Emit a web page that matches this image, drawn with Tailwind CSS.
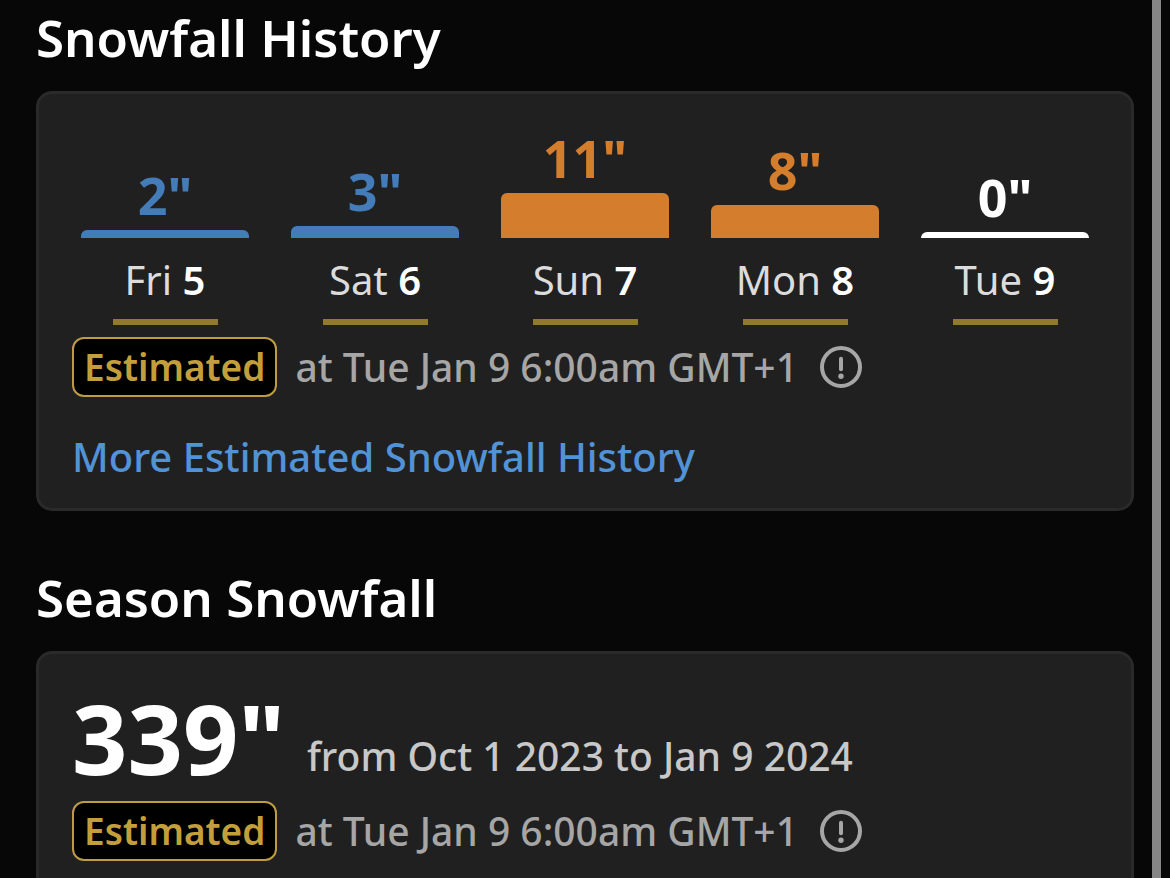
<!DOCTYPE html>
<html lang="en">
<head>
    <meta charset="UTF-8">
    <meta name="viewport" content="width=device-width, initial-scale=1.0">
    <title>Snowfall History</title>
    <script src="https://cdn.jsdelivr.net/npm/@tailwindcss/browser@4"></script>
</head>
<body class="flex h-screen overflow-hidden bg-[#070707] font-['Noto_Sans',sans-serif] text-white">
    <main class="flex-1 pl-9 pr-[18px] pt-[7px]">
        <!-- Snowfall History -->
        <section>
            <h2 class="mb-6 text-[51px] leading-[60px] font-semibold">Snowfall History</h2>
            <div class="rounded-2xl border-3 border-[#2a2a2a] bg-[#202020] px-[33px] pb-6">
                <ul class="-mx-3 grid grid-cols-5">
                    <li class="flex flex-col items-center">
                        <div class="flex h-36 w-4/5 flex-col justify-end text-center text-[#437cb8]">
                            <span class="mb-[5px] text-[52px] leading-[60px] font-bold">2"</span>
                            <div class="h-2 rounded-t-md bg-[#437cb8]"></div>
                        </div>
                        <p class="mt-[18px] text-[40px] leading-[48px] text-[#dcdcdc]">Fri <b class="font-semibold text-white">5</b></p>
                        <div class="mt-[15px] h-[6px] w-1/2 bg-[#91792d]"></div>
                    </li>
                    <li class="flex flex-col items-center">
                        <div class="flex h-36 w-4/5 flex-col justify-end text-center text-[#437cb8]">
                            <span class="mb-[5px] text-[52px] leading-[60px] font-bold">3"</span>
                            <div class="h-3 rounded-t-md bg-[#437cb8]"></div>
                        </div>
                        <p class="mt-[18px] text-[40px] leading-[48px] text-[#dcdcdc]">Sat <b class="font-semibold text-white">6</b></p>
                        <div class="mt-[15px] h-[6px] w-1/2 bg-[#91792d]"></div>
                    </li>
                    <li class="flex flex-col items-center">
                        <div class="flex h-36 w-4/5 flex-col justify-end text-center text-[#d47d2d]">
                            <span class="mb-[5px] text-[52px] leading-[60px] font-bold">11"</span>
                            <div class="h-[45px] rounded-t-md bg-[#d47d2d]"></div>
                        </div>
                        <p class="mt-[18px] text-[40px] leading-[48px] text-[#dcdcdc]">Sun <b class="font-semibold text-white">7</b></p>
                        <div class="mt-[15px] h-[6px] w-1/2 bg-[#91792d]"></div>
                    </li>
                    <li class="flex flex-col items-center">
                        <div class="flex h-36 w-4/5 flex-col justify-end text-center text-[#d47d2d]">
                            <span class="mb-[5px] text-[52px] leading-[60px] font-bold">8"</span>
                            <div class="h-[33px] rounded-t-md bg-[#d47d2d]"></div>
                        </div>
                        <p class="mt-[18px] text-[40px] leading-[48px] text-[#dcdcdc]">Mon <b class="font-semibold text-white">8</b></p>
                        <div class="mt-[15px] h-[6px] w-1/2 bg-[#91792d]"></div>
                    </li>
                    <li class="flex flex-col items-center">
                        <div class="flex h-36 w-4/5 flex-col justify-end text-center text-white">
                            <span class="mb-[5px] text-[52px] leading-[60px] font-bold">0"</span>
                            <div class="h-[6px] rounded-t-md bg-white"></div>
                        </div>
                        <p class="mt-[18px] text-[40px] leading-[48px] text-[#dcdcdc]">Tue <b class="font-semibold text-white">9</b></p>
                        <div class="mt-[15px] h-[6px] w-1/2 bg-[#91792d]"></div>
                    </li>
                </ul>
                <div class="mt-3 flex items-center">
                    <span class="rounded-xl border-2 border-[#bd9c44] bg-black px-[10px] text-[37px] leading-[56px] font-semibold text-[#c29f3b]">Estimated</span>
                    <span class="ml-[18px] text-[39px] leading-[56px] font-medium text-[#a6a6a6]">at Tue Jan 9 6:00am GMT+1</span>
                    <button type="button" aria-label="About estimates" class="ml-[22px] text-[#a6a6a6]">
                        <svg class="size-[42px]" viewBox="0 0 42 42" fill="none" stroke="currentColor" stroke-linecap="round">
                            <circle cx="21" cy="21" r="19" stroke-width="4"/>
                            <path d="M21 12.8v10.4" stroke-width="4"/>
                            <circle cx="21" cy="30.3" r="2.7" fill="currentColor" stroke="none"/>
                        </svg>
                    </button>
                </div>
                <a href="#" class="mt-[33px] block text-[40px] leading-[54px] font-medium text-[#5292d6]">More Estimated Snowfall History</a>
            </div>
        </section>

        <!-- Season Snowfall -->
        <section class="mt-14">
            <h2 class="mb-6 text-[51px] leading-[60px] font-semibold">Season Snowfall</h2>
            <div class="rounded-2xl border-3 border-[#2a2a2a] bg-[#202020] px-[33px] pt-[33px] pb-9">
                <div class="flex items-end">
                    <strong class="text-[97px] leading-[100px] font-bold">339"</strong>
                    <span class="mb-[7px] ml-[22px] text-[39px] leading-[48px] font-medium text-[#c8c8c8]">from Oct 1 2023 to Jan 9 2024</span>
                </div>
                <div class="mt-[14px] flex items-center">
                    <span class="rounded-xl border-2 border-[#bd9c44] bg-black px-[10px] text-[37px] leading-[56px] font-semibold text-[#c29f3b]">Estimated</span>
                    <span class="ml-[18px] text-[39px] leading-[56px] font-medium text-[#a6a6a6]">at Tue Jan 9 6:00am GMT+1</span>
                    <button type="button" aria-label="About estimates" class="ml-[22px] text-[#a6a6a6]">
                        <svg class="size-[42px]" viewBox="0 0 42 42" fill="none" stroke="currentColor" stroke-linecap="round">
                            <circle cx="21" cy="21" r="19" stroke-width="4"/>
                            <path d="M21 12.8v10.4" stroke-width="4"/>
                            <circle cx="21" cy="30.3" r="2.7" fill="currentColor" stroke="none"/>
                        </svg>
                    </button>
                </div>
            </div>
        </section>
    </main>

    <!-- Divider at the page edge -->
    <div class="mr-[9px] w-[9px] bg-[#868686]"></div>
</body>
</html>
